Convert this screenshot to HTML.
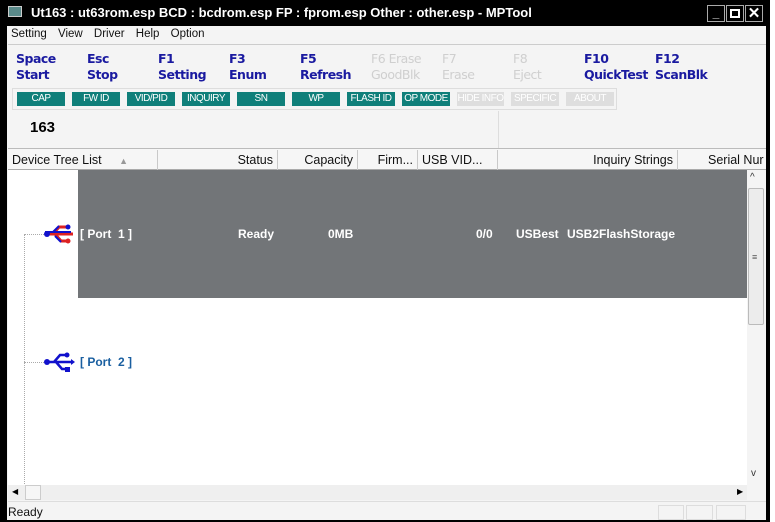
<!DOCTYPE html>
<html><head><style>
*{margin:0;padding:0;box-sizing:border-box}
body{width:775px;height:522px;position:relative;overflow:hidden;background:#fff;font-family:"Liberation Sans",sans-serif}
.a{position:absolute;white-space:nowrap}
.tb{color:#1a1aa0;font-weight:bold;font-size:12.5px;line-height:16px;font-family:"DejaVu Sans","Liberation Sans",sans-serif;letter-spacing:-0.5px}
.dis{color:#cfcfcf;font-weight:normal}
.btn{position:absolute;top:92px;height:14px;background:#0f7f7a;color:#fff;font-size:10px;text-align:center;line-height:14px;white-space:nowrap;overflow:hidden;letter-spacing:-0.5px}
.bd{background:#dedede;color:#fff}
.hd{position:absolute;top:150px;height:20px;border-right:1px solid #c9c9c9;font-size:12.5px;line-height:20px;color:#111;padding:0 4px;text-align:right;white-space:nowrap;overflow:hidden}
.w{color:#fff;font-weight:bold;font-size:12px;position:absolute;top:227px;white-space:nowrap}
</style></head><body>
<div class="a" style="left:0;top:0;width:770px;height:522px;background:#000"></div>
<div class="a" style="left:7px;top:26px;width:759px;height:494px;background:#f4f4f4"></div>
<div class="a" style="left:8px;top:6px;width:14px;height:11px;background:#5a8a8a;border:1px solid #ccc"></div>
<div class="a" style="left:31px;top:5px;color:#fff;font-weight:bold;font-size:13px">Ut163 : ut63rom.esp BCD : bcdrom.esp FP : fprom.esp Other : other.esp - MPTool</div>
<div class="a" style="left:707px;top:5px;width:18px;height:17px;background:#000;border:1px solid #aaa;color:#fff;font-weight:bold;font-size:12px;text-align:center">_</div>
<div class="a" style="left:726px;top:5px;width:18px;height:17px;background:#000;border:1px solid #aaa"><div style="margin:3px;width:10px;height:9px;border:2px solid #fff"></div></div>
<div class="a" style="left:745px;top:5px;width:18px;height:17px;background:#000;border:1px solid #aaa;color:#fff;font-weight:bold;font-size:15px;text-align:center;line-height:15px">✕</div>
<div class="a" style="left:770px;top:0;width:5px;height:522px;background:#fff"></div>
<div class="a" style="left:11px;top:27px;font-size:11.5px;line-height:14px;color:#111;word-spacing:8px">Setting View Driver Help Option</div>
<div class="a" style="left:8px;top:44px;width:758px;height:1px;background:#ccc"></div>
<div class="a tb" style="left:16px;top:51px">Space<br>Start</div>
<div class="a tb" style="left:87px;top:51px">Esc<br>Stop</div>
<div class="a tb" style="left:158px;top:51px">F1<br>Setting</div>
<div class="a tb" style="left:229px;top:51px">F3<br>Enum</div>
<div class="a tb" style="left:300px;top:51px">F5<br>Refresh</div>
<div class="a tb dis" style="left:371px;top:51px">F6 Erase<br>GoodBlk</div>
<div class="a tb dis" style="left:442px;top:51px">F7<br>Erase</div>
<div class="a tb dis" style="left:513px;top:51px">F8<br>Eject</div>
<div class="a tb" style="left:584px;top:51px">F10<br>QuickTest</div>
<div class="a tb" style="left:655px;top:51px">F12<br>ScanBlk</div>
<div class="a" style="left:12px;top:88px;width:605px;height:22px;border:1px solid #ddd"></div>
<div class="btn" style="left:17px;width:48px">CAP</div>
<div class="btn" style="left:72px;width:48px">FW ID</div>
<div class="btn" style="left:127px;width:48px">VID/PID</div>
<div class="btn" style="left:182px;width:48px">INQUIRY</div>
<div class="btn" style="left:237px;width:48px">SN</div>
<div class="btn" style="left:292px;width:48px">WP</div>
<div class="btn" style="left:347px;width:48px">FLASH ID</div>
<div class="btn" style="left:402px;width:48px">OP MODE</div>
<div class="btn bd" style="left:457px;width:47px">HIDE INFO</div>
<div class="btn bd" style="left:511px;width:48px">SPECIFIC</div>
<div class="btn bd" style="left:566px;width:48px">ABOUT</div>
<div class="a" style="left:30px;top:119px;font-weight:bold;font-size:15px;color:#000">163</div>
<div class="a" style="left:498px;top:111px;width:1px;height:38px;background:#ddd"></div>
<div class="a" style="left:8px;top:148px;width:758px;height:1px;background:#bbb"></div>
<div class="a" style="left:8px;top:149px;width:758px;height:21px;background:#f6f6f6;border-bottom:1px solid #aaa"></div>
<div class="hd" style="left:8px;width:150px;text-align:left">Device Tree List <span style="color:#999;font-size:9px;margin-left:14px">▲</span></div>
<div class="hd" style="left:158px;width:120px">Status</div>
<div class="hd" style="left:278px;width:80px">Capacity</div>
<div class="hd" style="left:358px;width:60px">Firm...</div>
<div class="hd" style="left:418px;width:80px;text-align:left">USB VID...</div>
<div class="hd" style="left:498px;width:180px">Inquiry Strings</div>
<div class="hd" style="left:678px;width:88px;border:0;text-align:left;padding-left:30px">Serial Nur</div>
<div class="a" style="left:8px;top:170px;width:739px;height:315px;background:#fff"></div>
<div class="a" style="left:78px;top:170px;width:669px;height:128px;background:#727578"></div>
<div class="a" style="left:24px;top:234px;width:1px;height:252px;border-left:1px dotted #aaa"></div>
<div class="a" style="left:24px;top:234px;width:20px;border-top:1px dotted #aaa"></div>
<div class="a" style="left:24px;top:362px;width:20px;border-top:1px dotted #aaa"></div>
<svg class="a" style="left:43px;top:222px" width="34" height="26" viewBox="0 0 34 26"><path d="M2 12h28M10 12l6-7h8M12 12l6 7h6" stroke="#d22" stroke-width="3" fill="none"/><path d="M2 10h26M10 10l6-6M12 14l6 6" stroke="#11c" stroke-width="2" fill="none"/><circle cx="4" cy="12" r="3" fill="#11c"/><circle cx="25" cy="5" r="2.5" fill="#11c"/><circle cx="25" cy="19" r="2.5" fill="#d22"/></svg>
<div class="w" style="left:80px">[ Port&nbsp; 1 ]</div>
<div class="w" style="left:238px">Ready</div>
<div class="w" style="left:328px">0MB</div>
<div class="w" style="left:476px">0/0</div>
<div class="w" style="left:516px">USBest</div>
<div class="w" style="left:567px">USB2FlashStorage</div>
<svg class="a" style="left:43px;top:351px" width="34" height="22" viewBox="0 0 34 22"><path d="M3 11h26M11 11l6-7h6M13 11l6 7h4" stroke="#11c" stroke-width="2.5" fill="none"/><circle cx="4" cy="11" r="3" fill="#11c"/><circle cx="24" cy="4" r="2.5" fill="#11c"/><rect x="22" y="16" width="5" height="5" fill="#11c"/><path d="M28 8l4 3-4 3z" fill="#11c"/></svg>
<div class="a" style="left:80px;top:355px;color:#1a5fa0;font-weight:bold;font-size:12px">[ Port&nbsp; 2 ]</div>
<div class="a" style="left:747px;top:170px;width:18px;height:315px;background:#f4f4f4"></div>
<div class="a" style="left:750px;top:172px;font-size:10px;color:#333">^</div>
<div class="a" style="left:748px;top:188px;width:16px;height:137px;background:#ececec;border:1px solid #bbb;border-radius:2px"></div>
<div class="a" style="left:752px;top:252px;font-size:9px;color:#555">≡</div>
<div class="a" style="left:751px;top:468px;font-size:10px;color:#333">v</div>
<div class="a" style="left:8px;top:485px;width:739px;height:15px;background:#efefef"></div>
<div class="a" style="left:12px;top:487px;font-size:8px">◀</div>
<div class="a" style="left:25px;top:485px;width:16px;height:15px;border:1px solid #ccc;background:#f6f6f6"></div>
<div class="a" style="left:737px;top:487px;font-size:8px">▶</div>
<div class="a" style="left:8px;top:501px;width:758px;height:19px;background:#f4f4f4;border-top:1px solid #ddd"></div>
<div class="a" style="left:8px;top:505px;font-size:12px;color:#111">Ready</div>
<div class="a" style="left:658px;top:505px;width:26px;height:15px;border:1px solid #ddd"></div>
<div class="a" style="left:686px;top:505px;width:27px;height:15px;border:1px solid #ddd"></div>
<div class="a" style="left:716px;top:505px;width:30px;height:15px;border:1px solid #ddd"></div>
</body></html>
